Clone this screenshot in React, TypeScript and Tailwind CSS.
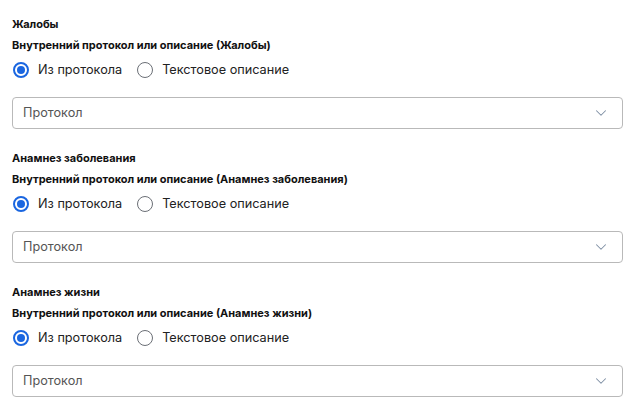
import { ChevronDown } from 'lucide-react'

const sections = [
  { title: 'Жалобы', sub: 'Внутренний протокол или описание (Жалобы)' },
  { title: 'Анамнез заболевания', sub: 'Внутренний протокол или описание (Анамнез заболевания)' },
  { title: 'Анамнез жизни', sub: 'Внутренний протокол или описание (Анамнез жизни)' },
]

const Radio = ({ checked, label }: { checked?: boolean; label: string }) => (
  <label className="flex items-center gap-[9px]">
    <span
      className={
        checked
          ? 'flex h-4 w-4 items-center justify-center rounded-full border-2 border-[#1a66e0]'
          : 'h-4 w-4 rounded-full border-[1.5px] border-[#6b6f76]'
      }
    >
      {checked && <span className="h-2 w-2 rounded-full bg-[#1a66e0]" />}
    </span>
    <span className="text-[12.7px] text-[#222]">{label}</span>
  </label>
)

const Section = ({ title, sub }: { title: string; sub: string }) => (
  <div className="flex flex-col">
    <div className="h-4 text-[11px] font-bold leading-4 text-[#111]">{title}</div>
    <div className="mt-[5px] h-4 text-[11px] font-bold leading-4 text-[#111]">{sub}</div>
    <div className="mt-[7px] flex h-5 items-center gap-[15px] pl-px">
      <Radio checked label="Из протокола" />
      <Radio label="Текстовое описание" />
    </div>
    <div className="mt-[17px] flex h-8 items-center justify-between rounded border border-[#b9b9b9] pl-[10px] pr-[12px]">
      <span className="text-[12.7px] text-[#555]">Протокол</span>
      <ChevronDown className="h-[18px] w-[18px] text-[#7d8ea3]" strokeWidth={1.4} />
    </div>
  </div>
)

export default function App() {
  return (
    <div className="flex w-[635px] flex-col gap-[21px] bg-white px-3 pt-4" style={{ fontFamily: 'Inter, sans-serif' }}>
      {sections.map((s) => (
        <Section key={s.title} {...s} />
      ))}
    </div>
  )
}
